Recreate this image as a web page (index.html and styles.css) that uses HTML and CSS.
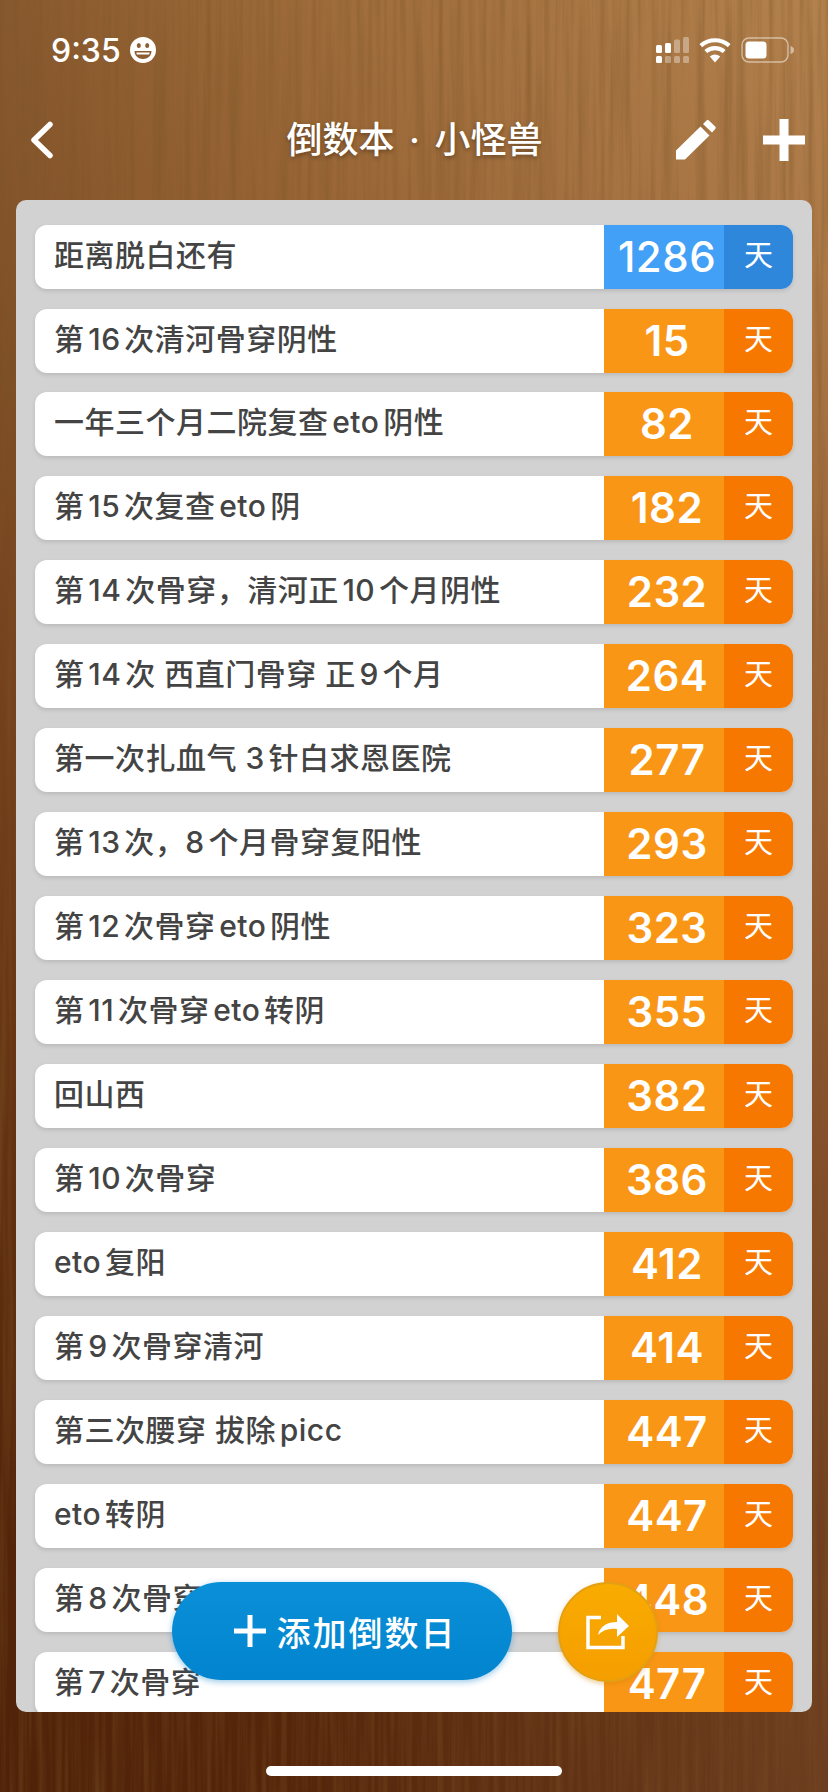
FILE: index.html
```html
<!DOCTYPE html>
<html lang="zh-CN">
<head>
    <meta charset="UTF-8">
    <meta name="viewport" content="width=device-width, initial-scale=1.0">
    <title>倒数本</title>
    <link rel="stylesheet" href="styles.css">
</head>
<body>
    <!-- wood grain behind everything -->
    <svg class="wood" width="828" height="1792" aria-hidden="true">
        <defs>
            <filter id="grain" x="0" y="0" width="100%" height="100%">
                <feTurbulence type="fractalNoise" baseFrequency="0.16 0.004" numOctaves="4" seed="11"/>
                <feColorMatrix type="matrix" values="0 0 0 0 0.2  0 0 0 0 0.09  0 0 0 0 0.02  0.9 0 0 0 -0.36"/>
            </filter>
        </defs>
        <rect width="828" height="1792" filter="url(#grain)"/>
    </svg>

    <div class="status-bar">
        <div class="status-time">
            <span>9:35</span>
            <svg class="smiley" width="26" height="26" viewBox="0 0 26 26">
                <circle cx="13" cy="13" r="13" fill="#fff"/>
                <ellipse cx="8.800" cy="8.500" rx="2" ry="2.600" fill="#8d5c30"/>
                <ellipse cx="17.200" cy="8.500" rx="2" ry="2.600" fill="#8d5c30"/>
                <path d="M4.500 14h17c0 4.800-3.800 8-8.500 8s-8.500-3.200-8.500-8z" fill="#8d5c30"/>
                <path d="M6.300 15.600h13.400l-.5 1.800h-12.400z" fill="#fff"/>
            </svg>
        </div>
        <div class="status-icons">
            <svg width="33" height="26" viewBox="0 0 33 26">
                <g fill="#fff">
                    <rect x="0" y="8" width="6" height="8" rx="1.500"/>
                    <rect x="9" y="6" width="6" height="10" rx="1.500"/>
                    <rect x="0" y="19" width="6" height="7" rx="1.500"/>
                </g>
                <g fill="#fff" opacity=".35">
                    <rect x="18" y="2.500" width="6" height="13.500" rx="1.500"/>
                    <rect x="27" y="0" width="6" height="16" rx="1.500"/>
                    <rect x="9" y="19" width="6" height="7" rx="1.500"/>
                    <rect x="18" y="19" width="6" height="7" rx="1.500"/>
                    <rect x="27" y="19" width="6" height="7" rx="1.500"/>
                </g>
            </svg>
            <svg width="32" height="25" viewBox="0 0 32 25">
                <path d="M16 24.500l-5.200-6a8 8 0 0 1 10.400 0z" fill="#fff"/>
                <path d="M6.800 13.500a14 14 0 0 1 18.400 0M1.800 7.600a21.500 21.500 0 0 1 28.400 0" fill="none" stroke="#fff" stroke-width="4.200"/>
            </svg>
            <svg width="53" height="26" viewBox="0 0 53 26">
                <rect x="1" y="1" width="46" height="24" rx="7" fill="none" stroke="#fff" stroke-opacity=".5" stroke-width="1.500"/>
                <rect x="4.500" y="4.500" width="21" height="17" rx="3.500" fill="#fff"/>
                <path d="M49.500 9c2 .6 3.500 2 3.500 4s-1.500 3.400-3.500 4z" fill="#fff" fill-opacity=".5"/>
            </svg>
        </div>
    </div>

    <header class="nav-bar">
        <svg class="nav-back" width="24" height="38" viewBox="0 0 24 38">
            <path d="M21 3.500L5 19l16 15.500" fill="none" stroke="#fff" stroke-width="5.500" stroke-linecap="round" stroke-linejoin="round"/>
        </svg>
        <h1 class="nav-title">倒数本 · 小怪兽</h1>
        <svg class="nav-edit" width="40" height="40" viewBox="0 0 40 40">
            <path d="M0 30.500L24.500 6.500l9 9L9 39.500H0zM27 4l3.500-3.500c.8-.7 1.700-.7 2.400 0l6.300 6.100c.7.800.7 1.700 0 2.400L36 12.500z" fill="#fff"/>
        </svg>
        <svg class="nav-plus" width="42" height="42" viewBox="0 0 42 42">
            <path d="M16.500 0h9v16.500H42v9H25.500V42h-9V25.500H0v-9h16.500z" fill="#fff"/>
        </svg>
    </header>

    <main class="panel">
        <div class="row row-blue">
            <div class="row-name">距离脱白还有</div>
            <div class="row-num">1286</div>
            <div class="row-unit">天</div>
        </div>
        <div class="row"><div class="row-name">第16次清河骨穿阴性</div><div class="row-num">15</div><div class="row-unit">天</div></div>
        <div class="row"><div class="row-name">一年三个月二院复查eto阴性</div><div class="row-num">82</div><div class="row-unit">天</div></div>
        <div class="row"><div class="row-name">第15次复查eto阴</div><div class="row-num">182</div><div class="row-unit">天</div></div>
        <div class="row"><div class="row-name">第14次骨穿，清河正10个月阴性</div><div class="row-num">232</div><div class="row-unit">天</div></div>
        <div class="row"><div class="row-name">第14次 西直门骨穿 正9个月</div><div class="row-num">264</div><div class="row-unit">天</div></div>
        <div class="row"><div class="row-name">第一次扎血气 3针白求恩医院</div><div class="row-num">277</div><div class="row-unit">天</div></div>
        <div class="row"><div class="row-name">第13次，8个月骨穿复阳性</div><div class="row-num">293</div><div class="row-unit">天</div></div>
        <div class="row"><div class="row-name">第12次骨穿eto阴性</div><div class="row-num">323</div><div class="row-unit">天</div></div>
        <div class="row"><div class="row-name">第11次骨穿eto转阴</div><div class="row-num">355</div><div class="row-unit">天</div></div>
        <div class="row"><div class="row-name">回山西</div><div class="row-num">382</div><div class="row-unit">天</div></div>
        <div class="row"><div class="row-name">第10次骨穿</div><div class="row-num">386</div><div class="row-unit">天</div></div>
        <div class="row"><div class="row-name">eto复阳</div><div class="row-num">412</div><div class="row-unit">天</div></div>
        <div class="row"><div class="row-name">第9次骨穿清河</div><div class="row-num">414</div><div class="row-unit">天</div></div>
        <div class="row"><div class="row-name">第三次腰穿 拔除picc</div><div class="row-num">447</div><div class="row-unit">天</div></div>
        <div class="row"><div class="row-name">eto转阴</div><div class="row-num">447</div><div class="row-unit">天</div></div>
        <div class="row"><div class="row-name">第8次骨穿</div><div class="row-num">448</div><div class="row-unit">天</div></div>
        <div class="row"><div class="row-name">第7次骨穿</div><div class="row-num">477</div><div class="row-unit">天</div></div>
    </main>

    <button class="add-btn">
        <svg width="32" height="32" viewBox="0 0 32 32"><path d="M13.500 0h5v13.500H32v5H18.500V32h-5V18.500H0v-5h13.500z" fill="#fff"/></svg>
        <span>添加倒数日</span>
    </button>
    <button class="share-btn">
        <svg width="44" height="40" viewBox="0 0 44 40">
            <path d="M15 5.500H2v30h35V24" fill="none" stroke="#fff" stroke-width="3.500"/>
            <path d="M12 23c2-9 9-13 19-13V2l12 12-12 11v-8c-8-1-14 1-19 6z" fill="#fff"/>
        </svg>
    </button>

    <div class="home-indicator"></div>
</body>
</html>
```

FILE: styles.css
```css
/* Reset default styles */
* {
    margin: 0;
    padding: 0;
    box-sizing: border-box;
}
body {
    position: relative;
    width: 828px;
    height: 1792px;
    overflow: hidden;
    display: flex;
    flex-direction: column;
    font-family: 'Inter', 'Noto Sans CJK SC', sans-serif;
    color: #fff;
    background:
        linear-gradient(90deg, rgba(60,25,5,0.30) 0, rgba(60,25,5,0.10) 35%, rgba(255,225,180,0.12) 100%),
        linear-gradient(180deg, #a8743f 0, #a06a38 15%, #82481f 50%, #5e2a0c 85%, #58260a 100%);
}
.wood {
    position: absolute;
    left: 0;
    top: 0;
}

/* Status bar */
.status-bar {
    position: relative;
    height: 100px;
    display: flex;
    justify-content: space-between;
    align-items: center;
    padding: 0 34px 0 51px;
}
.status-time {
    display: flex;
    align-items: center;
    gap: 9px;
    font-size: 32px;
    font-weight: 500;
}
.status-icons {
    display: flex;
    align-items: center;
    gap: 10px;
}

/* Nav bar */
.nav-bar {
    position: relative;
    height: 100px;
    display: flex;
    align-items: center;
    padding: 0 23px 20px 29px;
}
.nav-title {
    flex: 1;
    text-align: center;
    font-size: 36px;
    font-weight: 500;
    line-height: 1;
    word-spacing: 5px;
    padding-left: 100px;
    text-shadow: 0 2px 4px rgba(0,0,0,0.35);
}
.nav-edit {
    margin-right: 47px;
}

/* List panel */
.panel {
    position: relative;
    width: 796px;
    height: 1512px;
    margin-left: 16px;
    padding: 24.6px 19px 0;
    background-color: #d2d2d2;
    border-radius: 10px;
    overflow: hidden;
    display: flex;
    flex-direction: column;
    gap: 19.94px;
    flex-shrink: 0;
}
.row {
    flex-shrink: 0;
    height: 64px;
    display: flex;
    border-radius: 12px;
    overflow: hidden;
    background-color: #fff;
    box-shadow: 0 2px 4px rgba(0,0,0,0.12);
}
.row-name {
    flex: 1;
    padding-left: 19px;
    font-size: 30px;
    font-weight: 500;
    line-height: 61px;
    letter-spacing: 0.5px;
    color: #444;
    white-space: nowrap;
    text-autospace: normal;
}
.row-num {
    width: 120px;
    padding-left: 6px;
    text-align: center;
    font-size: 42px;
    font-weight: 600;
    line-height: 64px;
    letter-spacing: 0.5px;
    background-color: #fa9616;
}
.row-unit {
    width: 69px;
    text-align: center;
    font-size: 29px;
    line-height: 62px;
    background-color: #f77800;
}
.row-blue .row-num {
    font-weight: 500;
    background-color: #42a0f6;
}
.row-blue .row-unit {
    background-color: #2f87dc;
}

/* Floating buttons */
.add-btn {
    position: absolute;
    left: 172px;
    top: 1582px;
    width: 340px;
    height: 98px;
    padding-left: 6px;
    border: none;
    border-radius: 49px;
    display: flex;
    justify-content: center;
    align-items: center;
    gap: 11px;
    color: #fff;
    font-family: inherit;
    font-size: 34px;
    font-weight: 500;
    letter-spacing: 2px;
    background: linear-gradient(180deg, #0a90d8, #0284ce);
    box-shadow: 0 2px 6px rgba(0,120,200,0.4);
}
.share-btn {
    position: absolute;
    left: 558px;
    top: 1582px;
    width: 100px;
    height: 100px;
    border: 2px solid #e3a014;
    border-radius: 50%;
    display: flex;
    justify-content: center;
    align-items: center;
    background: linear-gradient(180deg, #f9ab00, #f59e00);
    box-shadow: 0 2px 5px rgba(200,130,0,0.4);
}

.home-indicator {
    position: absolute;
    left: 266px;
    top: 1766px;
    width: 296px;
    height: 10px;
    border-radius: 5px;
    background-color: #fff;
}
```
